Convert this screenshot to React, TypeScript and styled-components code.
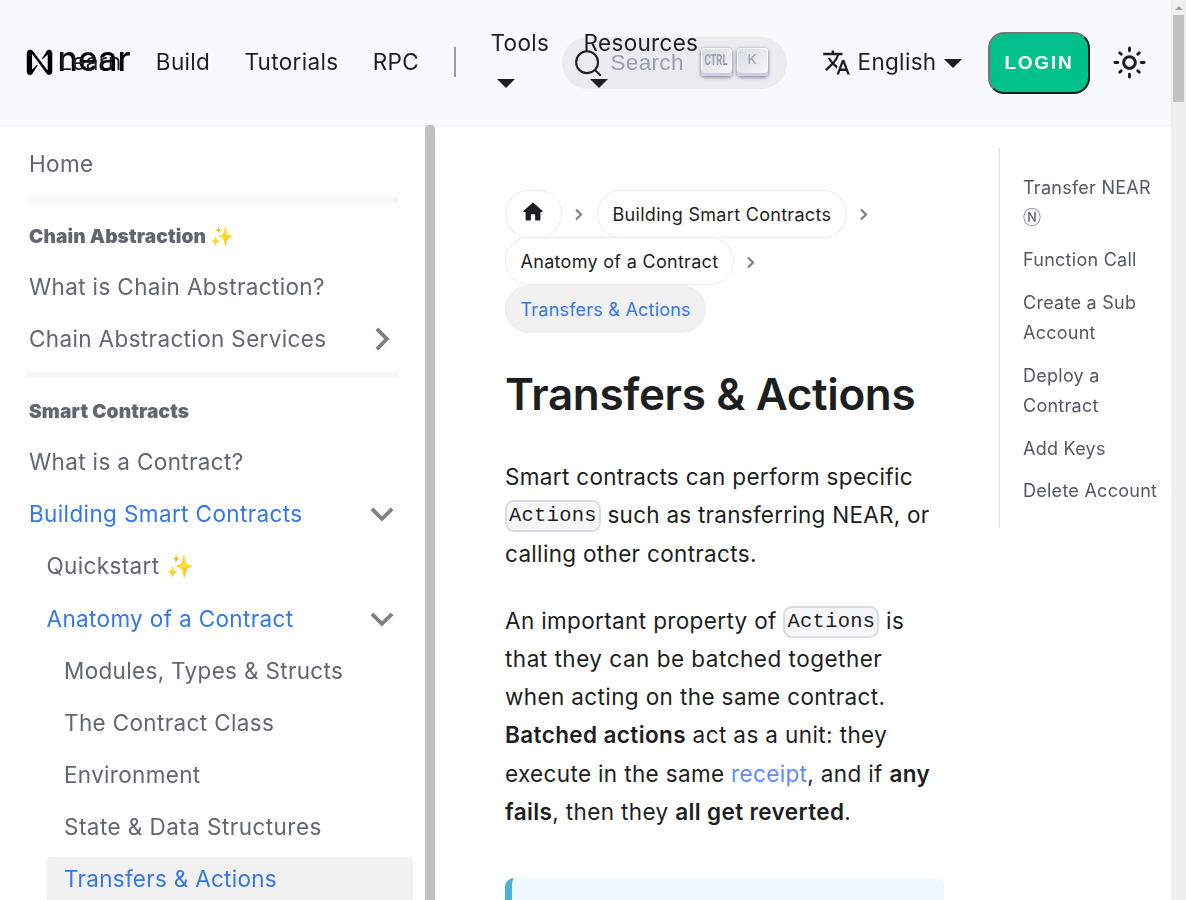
import React from "react";
import styled, { createGlobalStyle, css } from "styled-components";

const GlobalStyle = createGlobalStyle`
  *, *::before, *::after { box-sizing: border-box; }
  html, body { margin: 0; height: 900px; overflow: hidden; background: #fff; }
  body {
    font-family: Inter, "Noto Sans", sans-serif;
    font-size: 22.5px;
    line-height: 38.25px;
    letter-spacing: 0.32px;
    color: #1c1e21;
  }
  a { color: inherit; text-decoration: none; }
  svg { display: block; flex-shrink: 0; }
`;

const Frame = styled.div`
  display: flex;
  width: 1186px;
  height: 900px;
  overflow: hidden;
`;

const Page = styled.div`
  display: flex;
  flex-direction: column;
  width: 1171px;
  flex-shrink: 0;
`;

/* Top bar */

const Navbar = styled.nav`
  display: flex;
  align-items: flex-start;
  height: 125px;
  flex-shrink: 0;
  margin-bottom: 1px;
  padding: 32px 0 0 26px;
  background: #f8f9fb;
  box-shadow: 0 1px 2px rgba(0, 0, 0, 0.08);
  will-change: transform;

  > * {
    flex-shrink: 0;
  }
`;

const Brand = styled.a`
  display: flex;
  width: 16px;
  height: 59px;
  align-items: center;
  overflow: visible;
`;

const NavItem = styled.a`
  display: flex;
  align-items: center;
  height: 61px;
  padding: 0 17.15px;
  white-space: nowrap;
`;

const Separator = styled.span`
  width: 2px;
  height: 30px;
  margin: 15px 18px 0 17.5px;
  background: #97999c;
`;

const Dropdown = styled.a<{ $width: number }>`
  position: relative;
  z-index: 1;
  display: flex;
  flex-direction: column;
  width: ${(p) => p.$width}px;
  padding-left: 17px;
  margin-top: -8px;
  line-height: 38px;
`;

const Caret = styled.i<{ $inline?: boolean }>`
  width: 18px;
  border: 9px solid transparent;
  border-top-color: currentColor;
  border-bottom: 0;
  ${(p) =>
    p.$inline
      ? css`
          margin: 2px 0 0 1px;
        `
      : css`
          margin: 17px 0 0 6px;
        `}
`;

/* The search field slides under the trailing dropdown, whose label overlaps it. */
const SearchBox = styled.button`
  display: flex;
  align-items: center;
  width: 225px;
  height: 52px;
  margin: 5px 0 0 -152px;
  padding: 0 19px 0 12px;
  border: 0;
  border-radius: 40px;
  background: #ebecf0;
  color: #969faf;
  font: 22.5px "Liberation Sans", Arial, sans-serif;
  letter-spacing: 0.32px;
`;

const SearchLabel = styled.span`
  flex: 1;
  margin: -1px 0 0 8px;
  text-align: left;
`;

const Key = styled.kbd`
  display: flex;
  align-items: center;
  justify-content: center;
  width: 31px;
  height: 28px;
  margin: -3px 0 0 5px;
  padding-bottom: 3px;
  border-radius: 4px;
  background: linear-gradient(-225deg, #d5dbe4, #f8f8f8);
  box-shadow: inset 0 -3px 0 0 #cdcde6, inset 0 0 1px 1px #fff,
    0 1px 3px 1px rgba(30, 35, 90, 0.4);
`;

const Language = styled.a`
  display: flex;
  align-items: center;
  height: 61px;
  margin-left: 35px;
  gap: 7px;
`;

const LoginButton = styled.button`
  width: 102px;
  height: 62px;
  margin-left: 25.5px;
  padding: 0;
  border: 2px solid;
  border-color: #767676 #1c1e21 #1c1e21 #767676;
  border-radius: 16px;
  background: #00c08b;
  color: #fff;
  font: 600 19px "Liberation Sans", Arial, sans-serif;
  letter-spacing: 1.8px;
`;

const ThemeToggle = styled.a`
  display: flex;
  align-items: center;
  height: 61px;
  margin-left: 22px;
`;

/* Sidebar */

const Body = styled.div`
  display: flex;
  flex: 1;
  min-height: 0;
`;

const Sidebar = styled.aside`
  display: flex;
  width: 435px;
  height: 774px;
  flex-shrink: 0;
  will-change: transform;
`;

const Menu = styled.div`
  display: flex;
  flex-direction: column;
  width: 425px;
  height: 774px;
  overflow: hidden;
  padding: 15.5px 12px 0 26px;
`;

const SidebarScroll = styled.div`
  width: 10px;
  margin-top: -1px;
  border-radius: 4px 4px 0 0;
  background: #c0c0c0;
`;

const Row = styled.a<{ $depth?: number; $active?: boolean; $current?: boolean; $tracking?: number }>`
  display: flex;
  align-items: center;
  justify-content: space-between;
  flex-shrink: 0;
  height: 45px;
  margin: 0 0 7.17px ${(p) => (p.$depth ?? 0) * 17.5 + (p.$current ? -15 : 0)}px;
  padding: 0 17.500px 0 ${(p) => (p.$current ? 18 : 3)}px;
  border-radius: 5px;
  letter-spacing: ${(p) => p.$tracking ?? 0.36}px;
  color: ${(p) => (p.$active ? "#3377e9" : "#606770")};
  background: ${(p) => (p.$current ? "#f1f1f1" : "transparent")};
`;

const Rule = styled.hr`
  width: 372.5px;
  height: 6px;
  flex-shrink: 0;
  margin: 3.37px 0 9.75px;
  border: 0;
  background: #f7f7f7;
`;

const GroupTitle = styled.div`
  height: 46.5px;
  flex-shrink: 0;
  margin-bottom: 5.25px;
  padding-left: 3px;
  line-height: 46px;
  font-size: 19.125px;
  font-weight: 900;
  letter-spacing: 0.14px;
  color: #606770;
`;

/* Article */

const Article = styled.main`
  width: 439px;
  margin-left: 70px;
  padding-top: 64px;
  flex-shrink: 0;
`;

const Crumbs = styled.ul`
  display: flex;
  flex-wrap: wrap;
  margin: 0;
  padding: 0;
  list-style: none;
  font-size: 18px;
  line-height: 30px;
  letter-spacing: 0.3px;
`;

const Crumb = styled.li`
  display: flex;
  align-items: center;
  height: 47.5px;
`;

const CrumbLink = styled.a<{ $current?: boolean }>`
  display: flex;
  align-items: center;
  height: 48px;
  padding: 1.5px 14.5px 0;
  border: 1px solid #ededed;
  border-radius: 24px;
  ${(p) =>
    p.$current &&
    css`
      background: #f1f1f1;
      color: #3377e9;
      letter-spacing: 0.22px;
    `}
`;

const HomeLink = styled(CrumbLink)`
  width: 57px;
  padding: 0 0 3px 15px;
`;

const CrumbChevron = styled.svg`
  margin: 2px 14px 0 13px;
`;

const Title = styled.h1`
  margin: 33px 0 0;
  font-size: 44px;
  font-weight: 600;
  line-height: 56px;
  letter-spacing: -0.35px;
  white-space: nowrap;
`;

const Paragraph = styled.p<{ $top: number }>`
  margin: ${(p) => p.$top}px 0 0;
  white-space: nowrap;
`;

const Line = styled.span<{ $tracking?: number }>`
  display: block;
  letter-spacing: ${(p) => p.$tracking ?? 0.32}px;
`;

const Code = styled.code`
  display: inline-block;
  height: 32px;
  margin-bottom: 2px;
  padding: 0 2px;
  border: 2px solid #dadce0;
  border-radius: 9px;
  background: #f6f7f8;
  font: 20.4px/27px "Liberation Mono", monospace;
  letter-spacing: 0.32px;
  vertical-align: middle;
`;

const Link = styled.a`
  && {
    color: #618bfb;
  }
`;

const Strong = styled.strong`
  font-weight: 600;
`;

const Admonition = styled.div`
  height: 60px;
  margin-top: 46.5px;
  border-left: 7px solid #4cb3d4;
  border-radius: 9px;
  background: #eef9fd;
`;

/* Table of contents */

const Toc = styled.ul`
  display: flex;
  flex-direction: column;
  gap: 12.75px;
  width: 172px;
  height: 380px;
  margin: 22px 0 0 55px;
  padding: 24.5px 0 0 23px;
  border-left: 1px solid #dadde1;
  list-style: none;
  font-size: 18px;
  line-height: 30px;
  letter-spacing: 0.26px;
  color: #525860;
  will-change: transform;
`;

const TokenSign = styled.span`
  font-family: "Noto Sans CJK JP", sans-serif;
  line-height: 1;
`;

/* Window scrollbar */

const Scrollbar = styled.div`
  display: flex;
  flex-direction: column;
  align-items: center;
  width: 15px;
  background: #f0f0f0;
`;

const ScrollArrow = styled.i`
  margin-top: 6px;
  border: 4px solid transparent;
  border-top: 0;
  border-bottom-color: #a3a3a3;
`;

const ScrollThumb = styled.div`
  width: 11px;
  height: 87px;
  margin-top: 5px;
  background: #c1c1c1;
`;

const OverflowSvg = styled.svg`
  overflow: visible;
  letter-spacing: 0;
`;

const Logo = () => (
  <OverflowSvg width="108" height="40" viewBox="0 0 108 40">
    <path
      d="M22.300 8.600 17 16.600c-.4.600.3 1.100.8.700l4.700-4.400c.2-.2.4-.1.4.2v15.300c0 .3-.3.400-.5.200L7.400 9.500C6.600 8.400 5.400 7.800 4 7.800h-.3C1.900 7.800.4 9.200.4 11v19.600c0 1.800 1.500 3.200 3.300 3.200 1.200 0 2.300-.6 2.900-1.600l5.400-8c.4-.6-.3-1.100-.8-.7l-4.700 4.400c-.2.200-.4.100-.4-.2V12.800c0-.3.300-.4.500-.2l15 19.600c.7.900 1.800 1.500 2.900 1.500 1.800 0 3.300-1.400 3.300-3.200V11c0-1.800-1.500-3.200-3.300-3.200-1.100 0-1.700.2-2.200.8Z"
      transform="translate(.4 .2) scale(.93 .97)"
      fill="#000"
    />
    <text
      x="31.500"
      y="29.200"
      textLength="73"
      lengthAdjust="spacingAndGlyphs"
      fontFamily="Inter"
      fontSize="34"
      fontWeight="500"
    >
      near
    </text>
  </OverflowSvg>
);

const Chevron = ({ open }: { open?: boolean }) => (
  <svg width="28" height="28" viewBox="4.650 4.650 14.700 14.700" fill="#808080">
    <path
      d={
        open
          ? "M7.410 8.590 12 13.170l4.590-4.580L18 10l-6 6-6-6z"
          : "M8.590 16.590 13.170 12 8.590 7.410 10 6l6 6-6 6z"
      }
    />
  </svg>
);

const Separate = () => (
  <CrumbChevron width="8" height="13" viewBox="0 0 8 13" fill="none" stroke="#808080" strokeWidth="2.200">
    <path d="M1 1.500 6 6.500 1 11.500" />
  </CrumbChevron>
);

interface MenuEntry {
  label: string;
  depth?: number;
  active?: boolean;
  current?: boolean;
  chevron?: boolean;
  tracking?: number;
}

const menu: MenuEntry[] = [
  { label: "What is a Contract?" },
  { label: "Building Smart Contracts", active: true, chevron: true, tracking: 0.38 },
  { label: "Quickstart ✨", depth: 1 },
  { label: "Anatomy of a Contract", depth: 1, active: true, chevron: true },
  { label: "Modules, Types & Structs", depth: 2, tracking: 0.33 },
  { label: "The Contract Class", depth: 2 },
  { label: "Environment", depth: 2, tracking: 0.32 },
  { label: "State & Data Structures", depth: 2, tracking: 0.45 },
  { label: "Transfers & Actions", depth: 2, active: true, current: true, tracking: 0.28 },
];

export default function App() {
  return (
    <Frame>
      <GlobalStyle />
      <Page>
        <Navbar>
          <Brand>
            <Logo />
          </Brand>
          <NavItem>Learn</NavItem>
          <NavItem>Build</NavItem>
          <NavItem>Tutorials</NavItem>
          <NavItem>RPC</NavItem>
          <Separator />
          <Dropdown $width={93}>
            Tools
            <Caret />
          </Dropdown>
          <Dropdown $width={147}>
            Resources
            <Caret />
          </Dropdown>
          <SearchBox>
            <svg width="29" height="29" viewBox="0 0 20 20" fill="none" stroke="#1c1e21" strokeWidth="1.400">
              <path d="M14.386 14.386l4.088 4.088-4.088-4.088A7.533 7.533 0 1 1 3.733 3.733a7.533 7.533 0 0 1 10.653 10.653z" />
            </svg>
            <SearchLabel>Search</SearchLabel>
            <Key>
              <OverflowSvg width="24" height="18">
                <text x="0.500" y="14" textLength="23" lengthAdjust="spacingAndGlyphs" fontFamily="Roboto" fontSize="15" fontWeight="700" fill="#969faf">
                  CTRL
                </text>
              </OverflowSvg>
            </Key>
            <Key>
              <OverflowSvg width="12" height="18">
                <text x="1.500" y="13" fontFamily="Inter" fontSize="13.500" fill="#969faf">
                  K
                </text>
              </OverflowSvg>
            </Key>
          </SearchBox>
          <Language>
            <svg width="29" height="29" viewBox="0 0 24 24" fill="currentColor">
              <path d="M12.870 15.070l-2.540-2.510.03-.03c1.740-1.940 2.980-4.170 3.710-6.530H17V4h-7V2H8v2H1v1.990h11.170C11.500 7.920 10.440 9.750 9 11.350 8.070 10.320 7.300 9.190 6.690 8h-2c.73 1.630 1.730 3.170 2.980 4.560l-5.090 5.020L4 19l5-5 3.110 3.110.76-2.040zM18.500 10h-2L12 22h2l1.120-3h4.750L21 22h2l-4.500-12zm-2.620 7l1.620-4.330L19.120 17h-3.240z" />
            </svg>
            <span>English</span>
            <Caret $inline />
          </Language>
          <LoginButton>LOGIN</LoginButton>
          <ThemeToggle>
            <svg width="35" height="35" viewBox="0 0 24 24" fill="currentColor">
              <path d="M12 9c1.650 0 3 1.350 3 3s-1.350 3-3 3-3-1.350-3-3 1.350-3 3-3m0-2c-2.760 0-5 2.240-5 5s2.240 5 5 5 5-2.240 5-5-2.240-5-5-5zM2 13h2c.55 0 1-.45 1-1s-.45-1-1-1H2c-.55 0-1 .45-1 1s.45 1 1 1zm18 0h2c.55 0 1-.45 1-1s-.45-1-1-1h-2c-.55 0-1 .45-1 1s.45 1 1 1zM11 2v2c0 .55.45 1 1 1s1-.45 1-1V2c0-.55-.45-1-1-1s-1 .45-1 1zm0 18v2c0 .55.45 1 1 1s1-.45 1-1v-2c0-.55-.45-1-1-1s-1 .45-1 1zM5.990 4.580a.996.996 0 0 0-1.410 0 .996.996 0 0 0 0 1.410l1.060 1.060c.39.39 1.030.39 1.410 0s.39-1.030 0-1.410L5.990 4.580zm12.370 12.370a.996.996 0 0 0-1.410 0 .996.996 0 0 0 0 1.410l1.060 1.060c.39.39 1.030.39 1.410 0a.996.996 0 0 0 0-1.410l-1.060-1.060zm1.060-10.960a.996.996 0 0 0 0-1.410.996.996 0 0 0-1.410 0l-1.060 1.060c-.39.39-.39 1.030 0 1.410s1.030.39 1.410 0l1.060-1.060zM7.050 18.360a.996.996 0 0 0 0-1.410.996.996 0 0 0-1.410 0l-1.060 1.060c-.39.39-.39 1.030 0 1.410s1.030.39 1.410 0l1.060-1.060z" />
            </svg>
          </ThemeToggle>
        </Navbar>
        <Body>
          <Sidebar>
            <Menu>
              <Row>Home</Row>
              <Rule />
              <GroupTitle>Chain Abstraction ✨</GroupTitle>
              <Row>What is Chain Abstraction?</Row>
              <Row>
                Chain Abstraction Services
                <Chevron />
              </Row>
              <Rule />
              <GroupTitle>Smart Contracts</GroupTitle>
              {menu.map((m) => (
                <Row key={m.label} $depth={m.depth} $active={m.active} $current={m.current} $tracking={m.tracking}>
                  {m.label}
                  {m.chevron && <Chevron open />}
                </Row>
              ))}
            </Menu>
            <SidebarScroll />
          </Sidebar>
          <Article>
            <Crumbs>
              <Crumb>
                <HomeLink>
                  <svg width="24" height="24" viewBox="0 0 24 24" fill="currentColor">
                    <path d="M10 19v-5h4v5c0 .55.45 1 1 1h3c.55 0 1-.45 1-1v-7h1.700c.46 0 .68-.57.33-.87L12.670 3.600c-.38-.34-.96-.34-1.340 0l-8.360 7.530c-.34.300-.13.870.33.870H5v7c0 .55.45 1 1 1h3c.55 0 1-.45 1-1z" transform="translate(-.7 -.7) scale(1.060)" />
                  </svg>
                </HomeLink>
                <Separate />
              </Crumb>
              <Crumb>
                <CrumbLink>Building Smart Contracts</CrumbLink>
                <Separate />
              </Crumb>
              <Crumb>
                <CrumbLink>Anatomy of a Contract</CrumbLink>
                <Separate />
              </Crumb>
              <Crumb>
                <CrumbLink $current>Transfers &amp; Actions</CrumbLink>
              </Crumb>
            </Crumbs>
            <Title>Transfers &amp; Actions</Title>
            <Paragraph $top={36.6}>
              <Line>Smart contracts can perform specific</Line>
              <Line $tracking={0.25}>
                <Code>Actions</Code> such as transferring NEAR, or
              </Line>
              <Line>calling other contracts.</Line>
            </Paragraph>
            <Paragraph $top={28.9}>
              <Line $tracking={0.36}>
                An important property of <Code>Actions</Code> is
              </Line>
              <Line $tracking={0.5}>that they can be batched together</Line>
              <Line $tracking={0.38}>when acting on the same contract.</Line>
              <Line $tracking={0.39}>
                <Strong>Batched actions</Strong> act as a unit: they
              </Line>
              <Line $tracking={0.35}>
                execute in the same <Link>receipt</Link>, and if <Strong>any</Strong>
              </Line>
              <Line $tracking={0.37}>
                <Strong>fails</Strong>, then they <Strong>all get reverted</Strong>.
              </Line>
            </Paragraph>
            <Admonition />
          </Article>
          <Toc>
            <li>
              Transfer NEAR <TokenSign>Ⓝ</TokenSign>
            </li>
            <li>Function Call</li>
            <li>Create a Sub Account</li>
            <li>Deploy a Contract</li>
            <li>Add Keys</li>
            <li>Delete Account</li>
          </Toc>
        </Body>
      </Page>
      <Scrollbar>
        <ScrollArrow />
        <ScrollThumb />
      </Scrollbar>
    </Frame>
  );
}
